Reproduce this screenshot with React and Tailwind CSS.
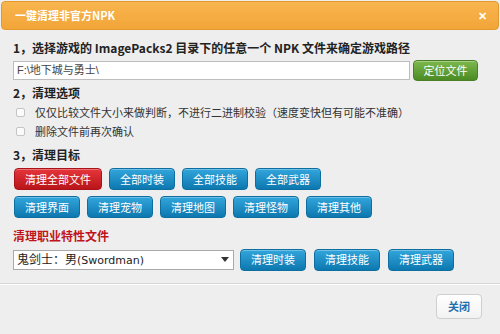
import React from "react";

const blue =
  "h-[22px] w-[66px] rounded-[4px] border border-[#0d6e9f] bg-gradient-to-b from-[#31a6dc] to-[#0c78b0] text-white text-[11px] flex items-center justify-center shadow-[inset_0_1px_0_rgba(255,255,255,0.3)]";

function Blue({ children }) {
  return <div className={blue}>{children}</div>;
}

function Check({ children }) {
  return (
    <div className="h-[19px] flex items-center">
      <div className="ml-[3px] w-[9px] h-[9px] rounded-[2px] border border-[#c4c4c4] bg-[#fbfbfb]" />
      <span className="ml-[10px] text-[11px] text-[#333]">{children}</span>
    </div>
  );
}

export default function App() {
  return (
    <div className="w-[500px] h-[334px] bg-[#eeeeee] overflow-hidden font-['Noto_Sans_CJK_SC','Noto_Sans',sans-serif] text-[#222]">
      <div className="mx-[1px] mt-[1px] h-[29px] rounded-[4px] border border-[#e29a2f] bg-gradient-to-b from-[#f8b54e] to-[#f2a537] flex items-center justify-between pl-[13px] pr-[11px]">
        <span className="text-white text-[11px] font-bold leading-none">一键清理非官方NPK</span>
        <span className="text-white text-[11px] font-bold leading-none">✕</span>
      </div>
      <div className="px-[13px]">
        <div className="mt-[10px] h-[16px] leading-[16px] text-[12px] font-bold text-[#222]">
          1，选择游戏的 ImagePacks2 目录下的任意一个 NPK 文件来确定游戏路径
        </div>
        <div className="mt-[4px] h-[21px] flex items-center">
          <div className="w-[397px] h-[19px] bg-white border border-[#bdbdbd] flex items-center pl-[3px] text-[11px] text-[#444] font-['Liberation_Sans','Noto_Sans_CJK_SC',sans-serif]">
            F:\地下城与勇士\
          </div>
          <div className="ml-[3px] w-[65px] h-[21px] rounded-[4px] border border-[#4a7f27] bg-gradient-to-b from-[#7db94c] to-[#4b8a24] text-white text-[11px] flex items-center justify-center shadow-[inset_0_1px_0_rgba(255,255,255,0.3)]">
            定位文件
          </div>
        </div>
        <div className="mt-[4px] h-[16px] leading-[16px] text-[12px] font-bold">2，清理选项</div>
        <div className="mt-[2px]">
          <Check>仅仅比较文件大小来做判断，不进行二进制校验（速度变快但有可能不准确）</Check>
          <Check>删除文件前再次确认</Check>
        </div>
        <div className="mt-[6px] h-[16px] leading-[16px] text-[12px] font-bold">3，清理目标</div>
        <div className="mt-[5px] pl-[1px] flex gap-[7px]">
          <div className="h-[22px] w-[88px] rounded-[4px] border border-[#a8141a] bg-gradient-to-b from-[#e5353b] to-[#b91419] text-white text-[11px] flex items-center justify-center shadow-[inset_0_1px_0_rgba(255,255,255,0.3)]">
            清理全部文件
          </div>
          <Blue>全部时装</Blue>
          <Blue>全部技能</Blue>
          <Blue>全部武器</Blue>
        </div>
        <div className="mt-[6px] pl-[1px] flex gap-[7px]">
          <Blue>清理界面</Blue>
          <Blue>清理宠物</Blue>
          <Blue>清理地图</Blue>
          <Blue>清理怪物</Blue>
          <Blue>清理其他</Blue>
        </div>
        <div className="mt-[10px] h-[16px] leading-[16px] text-[12px] font-bold text-[#c0141c]">清理职业特性文件</div>
        <div className="mt-[4px] h-[23px] flex items-center">
          <div className="w-[221px] h-[20px] bg-white border border-[#a9a9a9] flex items-center justify-between pl-[3px] pr-[4px]">
            <span className="text-[12px] text-[#222]">
              鬼剑士：男<span className="font-['DejaVu_Sans',sans-serif] text-[11px]">(Swordman)</span>
            </span>
            <svg width="8" height="5" viewBox="0 0 8 5"><path d="M0 0h8L4 5z" fill="#333" /></svg>
          </div>
          <div className="ml-[6px] flex gap-[8px]">
            <Blue>清理时装</Blue>
            <Blue>清理技能</Blue>
            <Blue>清理武器</Blue>
          </div>
        </div>
      </div>
      <div className="mt-[12px] border-t border-[#d6d6d6] border-b-white border-b" />
      <div className="mt-[9px] flex justify-end pr-[18px]">
        <div className="w-[46px] h-[25px] rounded-[4px] border border-[#cfcfcf] bg-gradient-to-b from-white to-[#f2f2f2] flex items-center justify-center text-[11px] font-bold text-[#1f6fae]">
          关闭
        </div>
      </div>
    </div>
  );
}
